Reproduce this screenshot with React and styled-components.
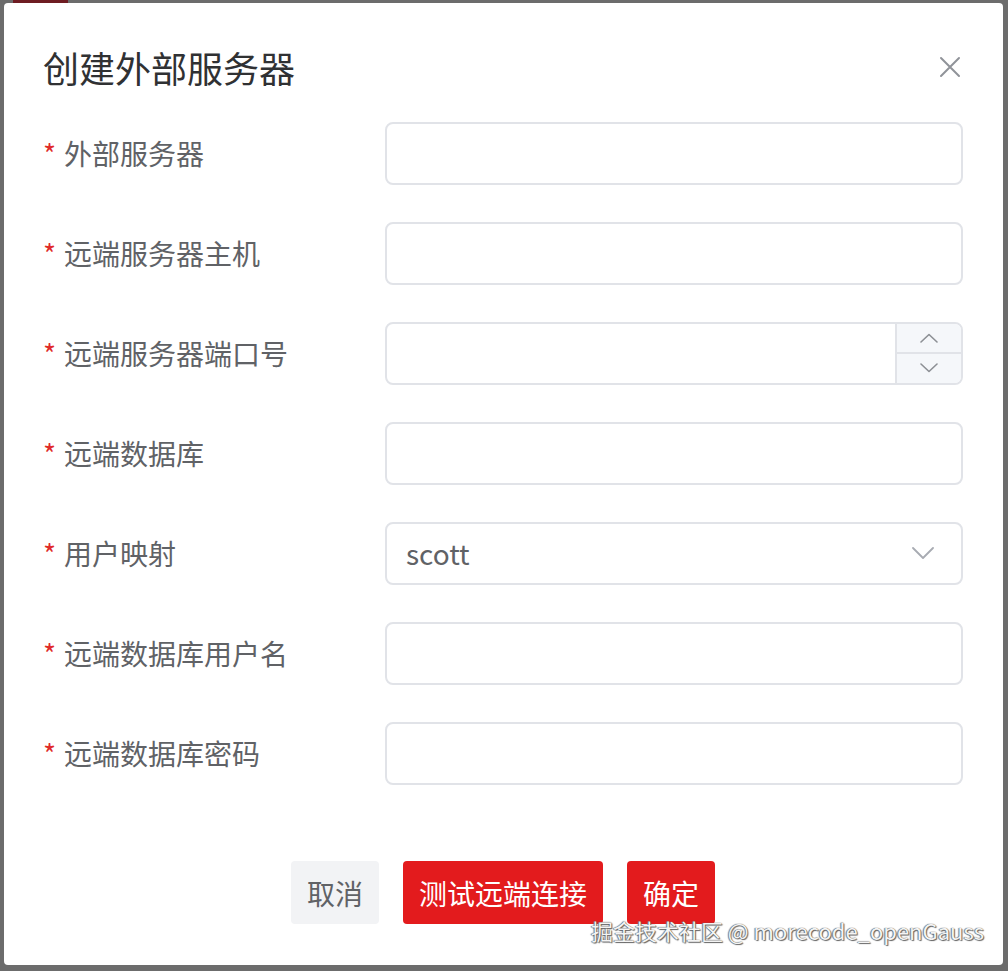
import React from "react";
import styled, { createGlobalStyle } from "styled-components";

const GlobalStyle = createGlobalStyle`
  html, body { margin: 0; padding: 0; }
  body {
    background: #6c6c6c;
    font-family: "Noto Sans CJK SC", "Noto Sans", sans-serif;
  }
  * { box-sizing: border-box; }
`;

const Page = styled.div`
  position: relative;
  width: 1008px;
  height: 971px;
  background: #6c6c6c;
  overflow: hidden;
`;

const TopStrip = styled.div`
  height: 3px;
  display: flex;
`;

const TopTab = styled.div`
  margin-left: 13px;
  width: 55px;
  height: 3px;
  background: #6e1c22;
`;

const Dialog = styled.div`
  margin-left: 4px;
  width: 999px;
  height: 962px;
  background: #ffffff;
  border-radius: 4px;
  padding: 0 40px 0 39px;
  display: flex;
  flex-direction: column;
`;

const Header = styled.div`
  display: flex;
  align-items: center;
  justify-content: space-between;
  padding-top: 40px;
  height: 88px;
`;

const Title = styled.h2`
  margin: 0;
  font-size: 36px;
  line-height: 48px;
  font-weight: 400;
  color: #303133;
`;

const CloseButton = styled.button`
  border: 0;
  background: transparent;
  padding: 0;
  margin-right: 2px;
  width: 22px;
  height: 22px;
  display: flex;
  align-items: center;
  justify-content: center;
  cursor: pointer;
`;

const Form = styled.div`
  margin-top: 30px;
  display: flex;
  flex-direction: column;
  gap: 36px;
`;

const Row = styled.div`
  display: grid;
  grid-template-columns: 342px 1fr;
  height: 64px;
  align-items: center;
`;

const Label = styled.label`
  display: flex;
  align-items: center;
  font-size: 28px;
  line-height: 64px;
  color: #606266;
`;

const Star = styled.span`
  color: #e02a2a;
  margin-right: 8px;
  font-size: 28px;
`;

const InputBox = styled.div`
  position: relative;
  height: 63px;
  border: 2px solid #e1e3e8;
  border-radius: 8px;
  background: #fff;
  display: flex;
  align-items: center;
  overflow: hidden;
`;

const InputText = styled.span`
  flex: 1;
  padding-left: 19px;
  font-size: 28px;
  color: #606266;
`;

const Controls = styled.div`
  width: 66px;
  align-self: stretch;
  display: flex;
  flex-direction: column;
  border-left: 2px solid #e1e3e8;
  background: #f5f7fa;
`;

const ControlHalf = styled.div`
  flex: 1;
  display: flex;
  align-items: center;
  justify-content: center;
  & + & { border-top: 2px solid #e1e3e8; }
`;

const Suffix = styled.div`
  width: 70px;
  display: flex;
  align-items: center;
  justify-content: center;
  padding-right: 6px;
`;

const Footer = styled.div`
  margin-top: 76px;
  display: flex;
  justify-content: center;
  gap: 24px;
`;

const Button = styled.button`
  height: 63px;
  padding: 0 16px;
  border: 0;
  border-radius: 4px;
  font-family: "Noto Sans CJK SC", "Noto Sans", sans-serif;
  font-size: 28px;
  background: ${(p) => (p.$primary ? "#e31b1d" : "#f2f3f5")};
  color: ${(p) => (p.$primary ? "#ffffff" : "#606266")};
  cursor: pointer;
`;

const Watermark = styled.div`
  position: absolute;
  right: 24px;
  top: 914px;
  font-size: 22px;
  line-height: 32px;
  color: #f4f4f4;
  text-shadow: 0 0 1px #444, 1px 1px 1px #666, -1px 0 1px #888;
  white-space: nowrap;
  font-family: "Noto Sans CJK SC", "Noto Sans", sans-serif;
`;

const Chevron = ({ dir }) => (
  <svg width="18" height="10" viewBox="0 0 18 10" fill="none">
    <path
      d={dir === "up" ? "M1 9 L9 1.5 L17 9" : "M1 1 L9 8.5 L17 1"}
      stroke="#8d9095"
      strokeWidth="1.6"
      strokeLinecap="round"
      strokeLinejoin="round"
    />
  </svg>
);

const fields = [
  { label: "外部服务器" },
  { label: "远端服务器主机" },
  { label: "远端服务器端口号", type: "number" },
  { label: "远端数据库" },
  { label: "用户映射", type: "select", value: "scott" },
  { label: "远端数据库用户名" },
  { label: "远端数据库密码" },
];

export default function App() {
  return (
    <Page>
      <GlobalStyle />
      <TopStrip>
        <TopTab />
      </TopStrip>
      <Dialog>
        <Header>
          <Title>创建外部服务器</Title>
          <CloseButton aria-label="close">
            <svg width="22" height="22" viewBox="0 0 22 22">
              <path d="M2 2 L20 20 M20 2 L2 20" stroke="#909399" strokeWidth="2" strokeLinecap="round" />
            </svg>
          </CloseButton>
        </Header>
        <Form>
          {fields.map((f) => (
            <Row key={f.label}>
              <Label>
                <Star>*</Star>
                {f.label}
              </Label>
              <InputBox>
                <InputText>{f.value || ""}</InputText>
                {f.type === "number" && (
                  <Controls>
                    <ControlHalf>
                      <Chevron dir="up" />
                    </ControlHalf>
                    <ControlHalf>
                      <Chevron dir="down" />
                    </ControlHalf>
                  </Controls>
                )}
                {f.type === "select" && (
                  <Suffix>
                    <svg width="22" height="12" viewBox="0 0 22 12" fill="none">
                      <path d="M1 1 L11 11 L21 1" stroke="#a8abb2" strokeWidth="1.8" strokeLinecap="round" strokeLinejoin="round" />
                    </svg>
                  </Suffix>
                )}
              </InputBox>
            </Row>
          ))}
        </Form>
        <Footer>
          <Button>取消</Button>
          <Button $primary>测试远端连接</Button>
          <Button $primary>确定</Button>
        </Footer>
      </Dialog>
      <Watermark>掘金技术社区 @ morecode_openGauss</Watermark>
    </Page>
  );
}
